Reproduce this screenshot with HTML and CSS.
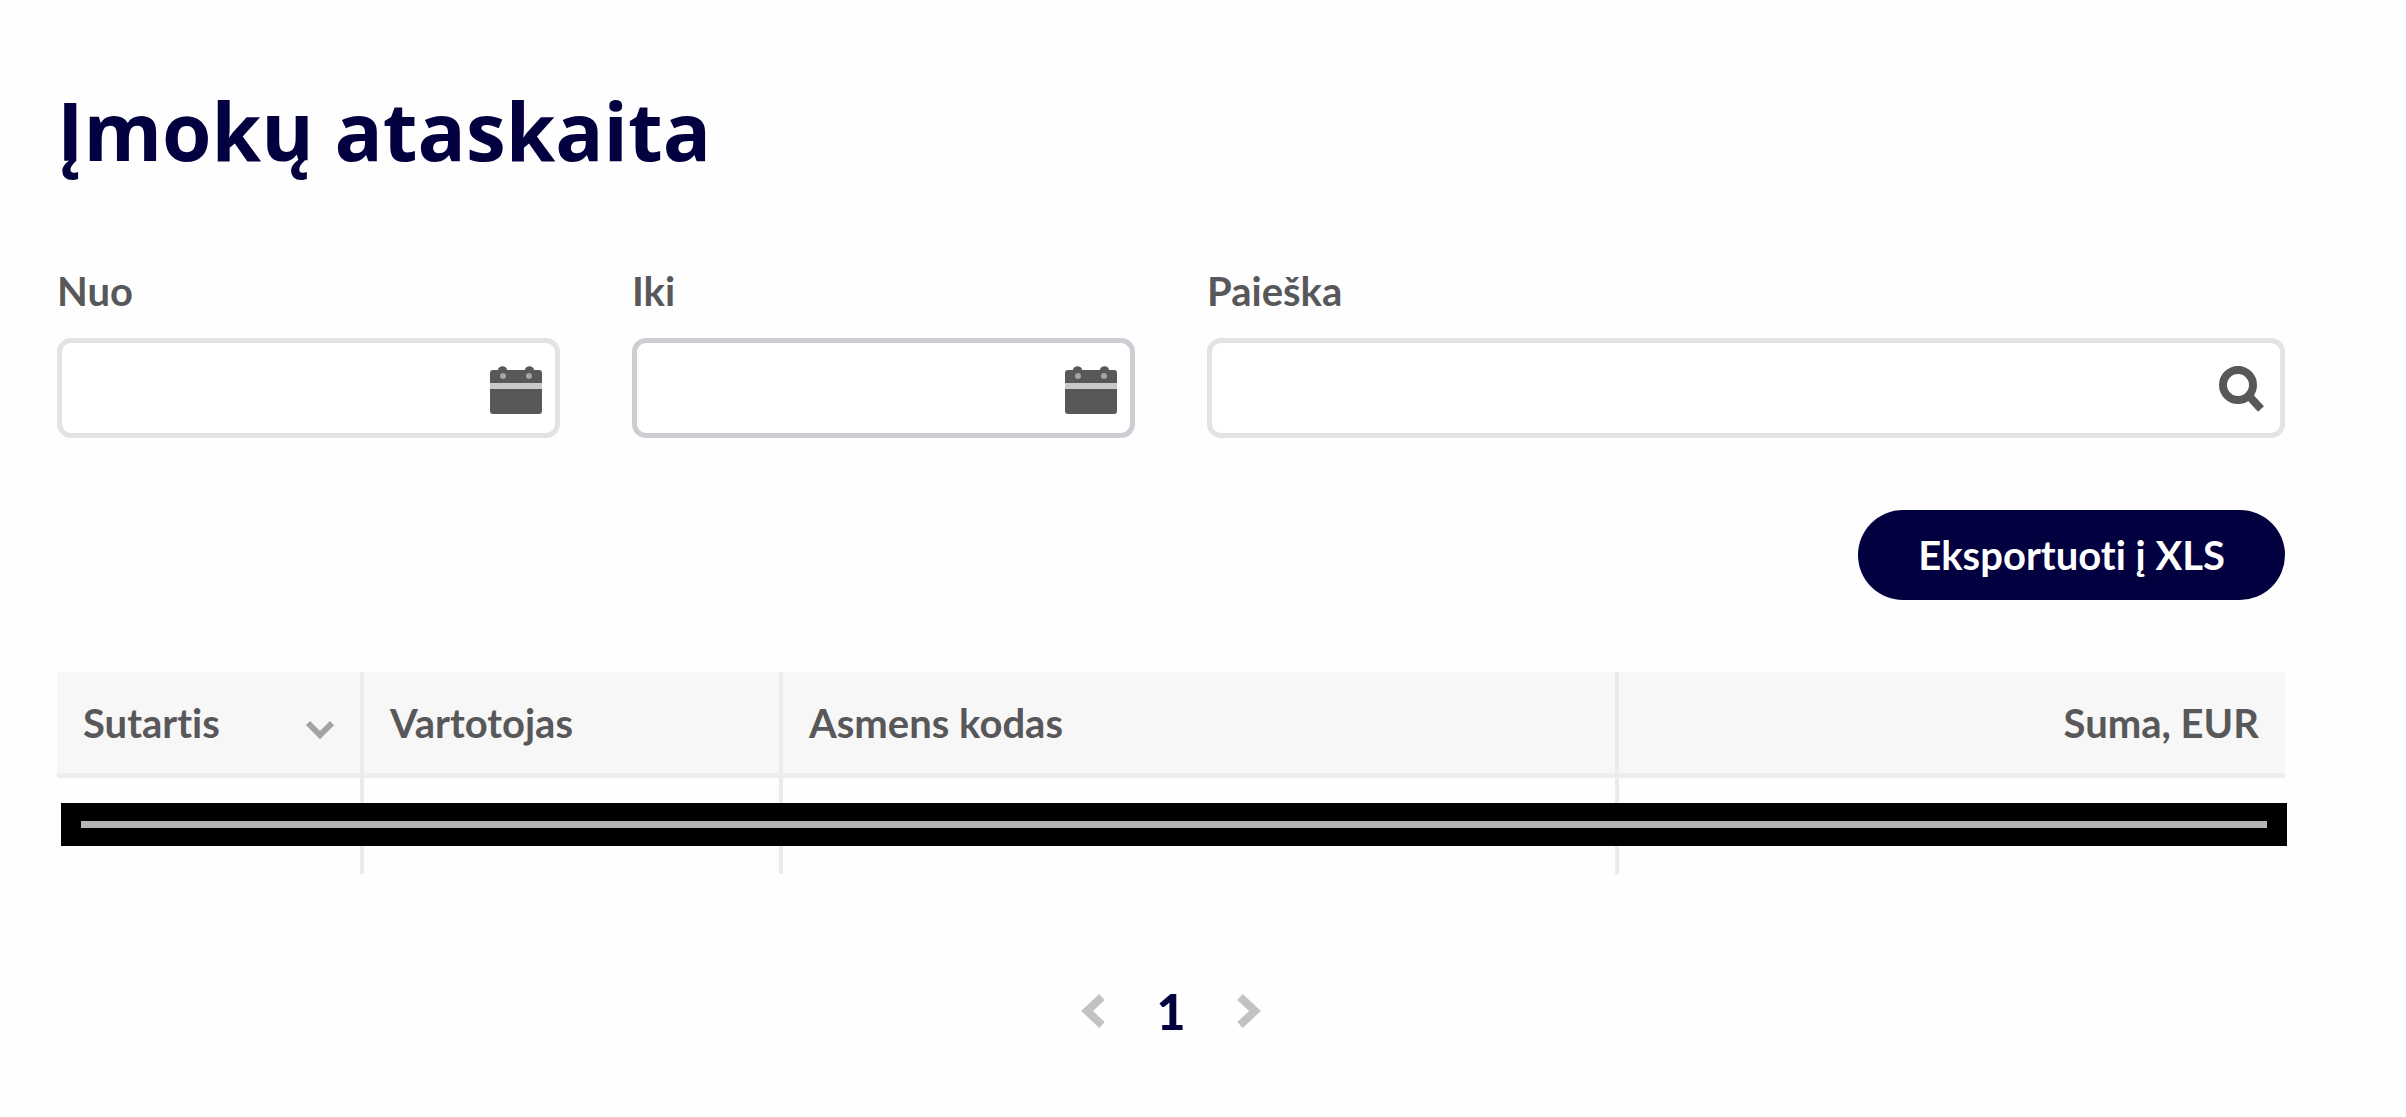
FILE: index.html
```html
<!DOCTYPE html>
<html lang="lt">
<head>
  <meta charset="UTF-8">
  <meta name="viewport" content="width=device-width, initial-scale=1.0">
  <title>Įmokų ataskaita</title>
  <link rel="stylesheet" href="styles.css">
</head>
<body>
  <main class="container">
    <h1>Įmokų ataskaita</h1>

    <form class="filters">
      <div class="field">
        <label for="from">Nuo</label>
        <div class="input-wrap">
          <input type="text" id="from">
          <svg class="icon" viewBox="0 0 52 48"><path d="M3 4h5c0-5 9-5 9 0h18c0-5 9-5 9 0h5q3 0 3 3v10H0V7q0-3 3-3z"/><path d="M0 23h52v22q0 3-3 3H3q-3 0-3-3z"/><path class="band" d="M0 17h52v6H0z"/><circle class="ring" cx="13" cy="10" r="3"/><circle class="ring" cx="39" cy="10" r="3"/></svg>
        </div>
      </div>
      <div class="field">
        <label for="to">Iki</label>
        <div class="input-wrap">
          <input type="text" id="to" class="active">
          <svg class="icon" viewBox="0 0 52 48"><path d="M3 4h5c0-5 9-5 9 0h18c0-5 9-5 9 0h5q3 0 3 3v10H0V7q0-3 3-3z"/><path d="M0 23h52v22q0 3-3 3H3q-3 0-3-3z"/><path class="band" d="M0 17h52v6H0z"/><circle class="ring" cx="13" cy="10" r="3"/><circle class="ring" cx="39" cy="10" r="3"/></svg>
        </div>
      </div>
      <div class="field">
        <label for="search">Paieška</label>
        <div class="input-wrap">
          <input type="text" id="search">
          <svg class="icon search" viewBox="0 0 52 48"><circle cx="21" cy="19" r="15"/><path d="M32 30l12 13"/></svg>
        </div>
      </div>
    </form>

    <div class="actions">
      <button type="button" class="export-btn">Eksportuoti į XLS</button>
    </div>

    <div class="table-wrap">
      <table>
        <thead>
          <tr>
            <th class="col-contract">
              <div class="sort">
                Sutartis
                <svg class="sort-icon" viewBox="0 0 30 20"><path d="M4 3l12 12L28 3"/></svg>
              </div>
            </th>
            <th class="col-user">Vartotojas</th>
            <th class="col-code">Asmens kodas</th>
            <th class="col-sum">Suma, EUR</th>
          </tr>
        </thead>
        <tbody>
          <tr><td></td><td></td><td></td><td></td></tr>
        </tbody>
      </table>
      <div class="redacted"></div>
    </div>

    <nav class="pagination">
      <a href="#" aria-label="Ankstesnis"><svg viewBox="0 0 26 38"><path d="M22 5L7 19l15 14"/></svg></a>
      <a href="#" class="current">1</a>
      <a href="#" aria-label="Kitas"><svg viewBox="0 0 26 38"><path d="M4 5l15 14L4 33"/></svg></a>
    </nav>
  </main>
</body>
</html>
```

FILE: styles.css
```css
* { margin: 0; padding: 0; box-sizing: border-box; }
body {
  font-family: Lato, 'Liberation Sans', sans-serif;
  background: #fefefe;
  color: #58585a;
  font-size: 40px;
  font-weight: bold;
  font-variant-ligatures: none;
  line-height: 48px;
}
.container {
  padding: 78px 121px 0 57px;
}
h1 {
  font-family: 'Open Sans', 'Noto Sans', sans-serif;
  font-size: 80px;
  line-height: 104px;
  color: #03003f;
  margin-bottom: 85px;
}
.filters {
  display: grid;
  grid-template-columns: 7fr 7fr 15fr;
  gap: 72px;
}
.field label {
  display: block;
  margin-bottom: 23px;
}
.input-wrap {
  position: relative;
}
.input-wrap input {
  display: block;
  width: 100%;
  height: 100px;
  padding: 0 88px 0 24px;
  border: 5px solid #e3e3e5;
  border-radius: 14px;
  background: #fff;
  font: inherit;
  color: inherit;
  outline: none;
}
.input-wrap input.active {
  border-color: #cdcdd4;
}
.icon {
  position: absolute;
  right: 18px;
  top: 28px;
  width: 52px;
  height: 48px;
  fill: #58585a;
}
.icon .band {
  fill: #c9c9c9;
}
.icon .ring {
  fill: #a5a5a5;
}
.icon.search {
  right: 16px;
  fill: none;
  stroke: #58585a;
  stroke-width: 8;
}
.actions {
  display: flex;
  justify-content: flex-end;
  margin: 72px 0;
}
.export-btn {
  height: 90px;
  padding: 0 60px;
  border: none;
  border-radius: 45px;
  background: #03003f;
  color: #fff;
  font: inherit;
  font-variant-ligatures: none;
  cursor: pointer;
}
.table-wrap {
  position: relative;
}
table {
  width: 100%;
  table-layout: fixed;
  border-collapse: separate;
  border-spacing: 0;
}
th {
  height: 106px;
  padding: 0 26px;
  background: #f7f7f7;
  border-bottom: 5px solid #ededed;
  text-align: left;
}
td {
  height: 96px;
}
th + th,
td + td {
  border-left: 4px solid #ebebeb;
}
.col-contract { width: 303px; }
.col-user { width: 419px; }
.col-code { width: 37.5%; }
.col-sum { text-align: right; }
.sort {
  display: flex;
  align-items: center;
  justify-content: space-between;
}
.sort-icon {
  width: 30px;
  height: 20px;
  margin-top: 14px;
  fill: none;
  stroke: #a3a3a3;
  stroke-width: 6;
}
.redacted {
  position: absolute;
  top: 131px;
  left: 4px;
  right: -2px;
  height: 43px;
  padding: 18px 20px;
  background: #000;
}
.redacted::before {
  content: '';
  display: block;
  height: 7px;
  background: #b5b5b5;
}
.pagination {
  display: flex;
  justify-content: center;
  align-items: center;
  gap: 50px;
  margin-top: 109px;
}
.pagination a {
  color: #03003f;
  font-size: 50px;
  font-weight: 900;
  line-height: 56px;
  text-decoration: none;
}
.pagination svg {
  display: block;
  width: 26px;
  height: 38px;
  fill: none;
  stroke: #c2c2c2;
  stroke-width: 8;
}
```
